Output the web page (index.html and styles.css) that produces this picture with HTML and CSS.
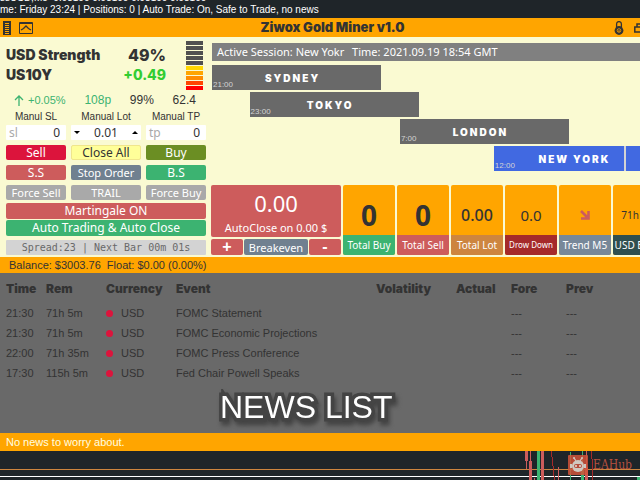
FILE: index.html
```html
<!DOCTYPE html>
<html lang="en">
<head>
    <meta charset="UTF-8">
    <meta name="viewport" content="width=device-width, initial-scale=1.0">
    <title>Ziwox Gold Miner v1.0</title>
    <link rel="stylesheet" href="styles.css">
</head>
<body>

    <!-- Terminal status lines -->
    <div class="status">
        <p>ssUSD,M5&nbsp; 0.98100 0.98100 0.98100 0.98100</p>
        <p>me: Friday 23:24 | Positions: 0 | Auto Trade: On, Safe to Trade, no news</p>
    </div>

    <main class="dashboard">
        <header class="titlebar">
            <div class="tools">
                <button type="button" aria-label="Calculator">
                    <svg width="8" height="14" viewBox="0 0 8 14"><path fill="#333" d="M0 0h8v14H0z"/><path stroke="#ffa500" d="M2 2.5h4M2 4.5h4M2 6.5h4M2 8.5h4M2 10.5h4M2 12.5h4"/></svg>
                </button>
                <button type="button" aria-label="Chart">
                    <svg width="14" height="12" viewBox="0 0 14 12"><path fill="none" stroke="#333" d="M.5.5h13v11H.5zM0 1.5h14"/><path fill="none" stroke="#333" stroke-width="1.3" d="M2 8l2.5-1.5L7 4l2.5 2.5L12 8"/></svg>
                </button>
            </div>
            <h1>Ziwox Gold Miner v1.0</h1>
            <div class="tools tools-right">
                <button type="button" aria-label="Lock">
                    <svg width="10" height="14" viewBox="0 0 10 14"><path fill="none" stroke="#333" stroke-width="1.3" d="M2.6 7V3a2.4 2.4 0 0 1 4.8 0v4"/><circle cx="5" cy="9.5" r="4.4" fill="#333"/><circle cx="5" cy="9.5" r="1.8" fill="none" stroke="#ffa500" stroke-width=".8"/><path stroke="#ffa500" stroke-width=".8" d="M5 9v2"/></svg>
                </button>
                <button type="button" aria-label="Restore">
                    <svg width="14" height="10" viewBox="0 0 14 10"><path fill="none" stroke="#333" stroke-width="1.5" d="M.8 4h9v5h-9zM3 4V1h10v5h-3"/></svg>
                </button>
            </div>
        </header>

        <div class="panels">
            <!-- Trade panel -->
            <section class="trade">
                <div class="strength">
                    <dl>
                        <dt>USD Strength</dt><dd class="percent">49%</dd>
                        <dt>US10Y</dt><dd class="up">+0.49</dd>
                    </dl>
                    <div class="gauge">
                        <i></i><i></i><i></i><i></i><i></i>
                        <i class="gold"></i><i class="orange"></i><i class="dark-orange"></i><i class="orange-red"></i><i class="red"></i>
                    </div>
                </div>
                <div class="readings">
                    <span class="green small"><svg width="10" height="11" viewBox="0 0 10 11"><path fill="none" stroke="currentColor" stroke-width="1.3" d="M5 11V1M1 5l4-4 4 4"/></svg> +0.05%</span>
                    <span class="green">108p</span>
                    <span>99%</span>
                    <span>62.4</span>
                </div>
                <div class="controls">
                    <label for="sl">Manul SL</label>
                    <label for="lot">Manual Lot</label>
                    <label for="tp">Manual TP</label>

                    <div class="field"><span>sl</span><input id="sl" type="text" value="0"></div>
                    <div class="field lot">
                        <button type="button" aria-label="Less"><svg width="6" height="3" viewBox="0 0 6 3"><path d="M0 0h6L3 3z"/></svg></button>
                        <input id="lot" type="text" value="0.01">
                        <button type="button" aria-label="More"><svg width="6" height="3" viewBox="0 0 6 3"><path d="M0 3h6L3 0z"/></svg></button>
                    </div>
                    <div class="field"><span>tp</span><input id="tp" type="text" value="0"></div>

                    <button type="button" class="btn crimson">Sell</button>
                    <button type="button" class="btn yellow">Close All</button>
                    <button type="button" class="btn olive">Buy</button>

                    <button type="button" class="btn rose">S.S</button>
                    <button type="button" class="btn slate small">Stop Order</button>
                    <button type="button" class="btn sea">B.S</button>

                    <button type="button" class="btn gray small">Force Sell</button>
                    <button type="button" class="btn gray small">TRAIL</button>
                    <button type="button" class="btn gray small">Force Buy</button>
                </div>
                <div class="modes">
                    <button type="button" class="btn rose">Martingale ON</button>
                    <button type="button" class="btn sea">Auto Trading &amp; Auto Close</button>
                </div>
                <p class="spread">Spread:23 | Next Bar 00m 01s</p>
            </section>

            <section class="market">
                <p class="session">Active Session: New Yokr <span>Time: 2021.09.19 18:54 GMT</span></p>

                <!-- One column for each hour, starting at 21:00 -->
                <div class="timeline">
                    <div class="bar sydney"><small>21:00</small><b>SYDNEY</b></div>
                    <div class="bar tokyo"><small>23:00</small><b>TOKYO</b></div>
                    <div class="bar london"><small>7:00</small><b>LONDON</b></div>
                    <div class="bar newyork"><small>12:00</small><b>NEW YORK</b><i class="now"></i></div>
                </div>

                <div class="tiles">
                    <div class="autoclose">
                        <div class="profit"><strong>0.00</strong><span>AutoClose on 0.00 $</span></div>
                        <div class="breakeven">
                            <button type="button" class="btn rose big">+</button>
                            <button type="button" class="btn slate small">Breakeven</button>
                            <button type="button" class="btn rose big">-</button>
                        </div>
                    </div>
                    <div class="tile"><strong class="count">0</strong><span class="sea">Total Buy</span></div>
                    <div class="tile"><strong class="count">0</strong><span class="rose">Total Sell</span></div>
                    <div class="tile"><strong class="lots">0.00</strong><span class="peru">Total Lot</span></div>
                    <div class="tile"><strong class="draw">0.0</strong><span class="brown tiny">Drow Down</span></div>
                    <div class="tile"><strong><svg width="10" height="10" viewBox="0 0 10 10"><path fill="none" stroke="#cd5c5c" stroke-width="2.6" d="M1 1l6 6M8.5 1v7.500H1"/></svg></strong><span class="lightslate">Trend M5</span></div>
                    <div class="tile"><strong class="hours">71h 5m</strong><span class="darkslate">USD Event</span></div>
                </div>
            </section>
        </div>

        <p class="balance">Balance: $3003.76&nbsp; Float: $0.00 (0.00%)</p>

        <!-- News calendar -->
        <section class="news">
            <table>
                <thead>
                    <tr><th class="c-time">Time</th><th class="c-rem">Rem</th><th class="c-cur">Currency</th><th class="c-event">Event</th><th class="c-vol">Volatility</th><th class="c-act">Actual</th><th class="c-fore">Fore</th><th>Prev</th></tr>
                </thead>
                <tbody>
                    <tr><td>21:30</td><td>71h 5m</td><td class="cur">USD</td><td>FOMC Statement</td><td></td><td></td><td>---</td><td>---</td></tr>
                    <tr><td>21:30</td><td>71h 5m</td><td class="cur">USD</td><td>FOMC Economic Projections</td><td></td><td></td><td>---</td><td>---</td></tr>
                    <tr><td>22:00</td><td>71h 35m</td><td class="cur">USD</td><td>FOMC Press Conference</td><td></td><td></td><td>---</td><td>---</td></tr>
                    <tr><td>17:30</td><td>115h 5m</td><td class="cur">USD</td><td>Fed Chair Powell Speaks</td><td></td><td></td><td>---</td><td>---</td></tr>
                </tbody>
            </table>
            <h2 class="caption">NEWS LIST</h2>
        </section>

        <p class="alert">No news to worry about.</p>
    </main>

    <!-- Price chart behind the panel -->
    <div class="chart">
        <svg class="candles" width="200" height="29" viewBox="0 0 200 29">
            <path fill="#cd5c5c" d="M85 0h3v10h-3zM86 10h1v8h-1zM90 0h1v10h-1zM89 10h3v19h-3zM94 27h1v2h-1zM101 0h3v29h-3zM118 16h1v13h-1zM146 0h1v16h-1zM145 16h3v13h-3z"/>
            <path fill="#3cb371" d="M97 0h3v29h-3zM130 1h1v28h-1zM142 0h1v15h-1zM141 15h3v14h-3zM197 26h3v3h-3z"/>
            <path fill="#a52a2a" d="M111 0h1v6h-1zM112 6h1v9h-1zM113 15h1v10h-1zM114 25h1v4h-1zM151 0h1v8h-1zM152 8h1v21h-1z"/>
        </svg>
        <a class="brand" href="#">
            <svg width="20" height="20" viewBox="0 0 20 20">
                <rect width="20" height="20" rx="1" fill="#d2533a" opacity=".85"/>
                <path stroke="#cfc4bc" stroke-width="1.3" d="M6 3l2 3M14 3l-2 3"/>
                <circle cx="6" cy="3" r="1" fill="#cfc4bc"/><circle cx="14" cy="3" r="1" fill="#cfc4bc"/>
                <ellipse cx="10" cy="11" rx="6" ry="6" fill="#cfc9c0"/>
                <path fill="#cfc9c0" d="M2 9h2v4H2zM16 9h2v4h-2z"/>
                <rect x="6" y="9" width="8" height="4" rx="2" fill="#b5503f"/>
                <circle cx="8" cy="11" r="1" fill="#e8e0d8"/><circle cx="12" cy="11" r="1" fill="#e8e0d8"/>
            </svg>
            <span>EAHub</span>
        </a>
    </div>

</body>
</html>
```
FILE: styles.css
```css
* {
    box-sizing: border-box;
}

body {
    margin: 0;
    min-height: 100vh;
    display: flex;
    flex-direction: column;
    overflow: hidden;
    color: #333333;
    background-color: #1f2529;
    font-family: "Liberation Sans", Arial, sans-serif;
    font-size: 12px;
}

p, h1, h2, dl, dd {
    margin: 0;
}

button, input {
    padding: 0;
    border: 0;
    background: none;
    color: inherit;
    font: inherit;
}

svg {
    display: block;
}

/* Status lines */
.status {
    height: 18px;
    display: flex;
    flex-direction: column;
    justify-content: flex-end;
    padding-bottom: 2px;
    overflow: hidden;
    color: #ffffff;
    font-size: 10px;
    line-height: 12px;
    white-space: nowrap;
}

/* The panel runs past the right edge of the window */
.dashboard {
    width: calc(100% + 25px);
}

.titlebar {
    height: 19px;
    padding: 0 3px;
    display: grid;
    grid-template-columns: 1fr auto 1fr;
    align-items: center;
    background-color: #ffa500;
}

.titlebar h1 {
    font-family: Inter, sans-serif;
    font-size: 13px;
    font-weight: 900;
    line-height: 19px;
}

.tools {
    display: flex;
    align-items: center;
    gap: 8px;
}

.tools-right {
    justify-content: flex-end;
    padding-right: 14px;
    gap: 10px;
}

.panels {
    display: flex;
    gap: 5px;
    padding-left: 6px;
    background-color: #fafad2;
}

/* Trade panel */
.trade {
    width: 200px;
    flex: none;
    padding: 4px 0 2px;
}

.strength {
    display: flex;
    justify-content: space-between;
    padding-right: 3px;
}

.strength dl {
    flex: 1;
    display: grid;
    grid-template-columns: 1fr auto;
    align-content: start;
    padding: 4px 20px 0 0;
    font-family: Inter, sans-serif;
    font-size: 14px;
    font-weight: 900;
    line-height: 20px;
}

.strength dd {
    text-align: right;
}

.strength .percent {
    font-size: 16px;
    font-weight: 800;
}

.up {
    color: #32cd32;
    font-weight: 800;
}

.gauge {
    width: 17px;
    display: flex;
    flex-direction: column;
    gap: 1px;
}

.gauge i {
    height: 4px;
    background-color: #505050;
}

.gauge .gold { background-color: #ffd700; }
.gauge .orange { background-color: #ffa500; }
.gauge .dark-orange { background-color: #ff8c00; }
.gauge .orange-red { background-color: #ff4500; }
.gauge .red { background-color: #ff0000; }

.readings {
    display: flex;
    align-items: center;
    justify-content: space-between;
    padding: 0 10px 0 8px;
    margin-top: 2px;
    line-height: 16px;
}

.readings span {
    display: flex;
    align-items: center;
    gap: 4px;
}

.readings .small {
    font-size: 11px;
}

.green {
    color: #3cb371;
}

.controls {
    display: grid;
    grid-template-columns: 60px 70px 60px;
    grid-template-rows: 12px repeat(4, 15px);
    gap: 5px;
}

.controls label {
    padding-top: 3px;
    font-size: 10px;
    line-height: 12px;
    text-align: center;
    white-space: nowrap;
}

.field {
    height: 15px;
    display: flex;
    align-items: center;
    justify-content: space-between;
    padding: 0 6px 0 3px;
    background-color: #ffffff;
    border-radius: 1px;
    font-family: "Noto Sans", sans-serif;
    line-height: 15px;
}

.field span {
    color: #a9a9a9;
}

.field input {
    width: 30px;
    height: 15px;
    text-align: right;
}

.field.lot {
    padding: 0 3px;
}

.field.lot input {
    text-align: center;
}

.btn {
    height: 15px;
    overflow: hidden;
    border-radius: 2px;
    color: #ffffff;
    font-family: "Noto Sans", sans-serif;
    font-size: 12px;
    line-height: 15px;
    white-space: nowrap;
}

.btn.small {
    font-size: 11px;
}

.btn.big {
    font-family: "Liberation Sans", Arial, sans-serif;
    font-size: 16px;
    font-weight: 700;
    line-height: 16px;
}

.crimson { background-color: #dc143c; }
.btn.yellow {
    background-color: #ffff99;
    border: 1px solid #f0e68c;
    color: #333333;
    line-height: 13px;
}
.olive { background-color: #6b8e23; }
.rose { background-color: #cd5c5c; }
.slate { background-color: #708090; }
.sea { background-color: #3cb371; }
.gray { background-color: #a9a9a9; }
.peru { background-color: #cd853f; }
.brown { background-color: #a52a2a; }
.lightslate { background-color: #778899; }
.darkslate { background-color: #2f4f4f; }

.modes {
    display: grid;
    gap: 1px;
    margin: 3px 0 4px;
}

.modes .btn {
    height: 16px;
    line-height: 16px;
}

.spread {
    border-radius: 1px;
    background-color: #d3d3d3;
    color: #696969;
    font-family: "DejaVu Sans Mono", monospace;
    font-size: 10px;
    line-height: 15px;
    text-align: center;
}

/* Market sessions */
.market {
    flex: 1;
    min-width: 0;
    display: flex;
    flex-direction: column;
    padding-top: 6px;
}

.session {
    margin-left: 1px;
    padding-left: 5px;
    background-color: #808080;
    color: #ffffff;
    font-family: "Noto Sans", sans-serif;
    font-size: 11px;
    line-height: 18px;
    white-space: nowrap;
}

.session span {
    margin-left: 5px;
}

.timeline {
    display: grid;
    grid-template-columns: repeat(24, 1fr);
    grid-auto-rows: 25px;
    gap: 2px 0;
    margin: 4px 2px 14px 1px;
}

.bar {
    position: relative;
    display: flex;
    align-items: center;
    justify-content: center;
    padding-right: 8px;
    background-color: #696969;
    color: #ffffff;
}

.sydney { grid-area: 1 / 1 / auto / span 9; }
.tokyo { grid-area: 2 / 3 / auto / span 9; }
.london { grid-area: 3 / 11 / auto / span 9; }
.newyork {
    grid-area: 4 / 16 / auto / span 9;
    background-color: #4169e1;
}

.bar b {
    font-family: Inter, sans-serif;
    font-size: 10px;
    font-weight: 900;
    letter-spacing: 2px;
}

.bar small {
    position: absolute;
    left: 1px;
    bottom: 0;
    color: #d3d3d3;
    font-size: 8px;
    line-height: 10px;
}

.now {
    position: absolute;
    top: 0;
    bottom: 0;
    right: 22%;
    width: 2px;
    background-color: #d3d3d3;
}

/* Tiles */
.tiles {
    display: grid;
    grid-template-columns: 130fr repeat(6, 52fr);
    gap: 2px;
    height: 70px;
}

.autoclose {
    display: grid;
    grid-template-rows: 1fr 16px;
    gap: 2px;
}

.profit {
    display: flex;
    flex-direction: column;
    align-items: center;
    border-radius: 2px;
    background-color: #cd5c5c;
    color: #ffffff;
    font-family: "Noto Sans", sans-serif;
    font-size: 11px;
    line-height: 14px;
}

.profit strong {
    font-size: 22px;
    font-weight: 400;
    line-height: 36px;
}

.breakeven {
    display: grid;
    grid-template-columns: 1fr 2fr 1fr;
    gap: 1px;
}

.breakeven .btn {
    height: 16px;
}

.tile {
    display: grid;
    grid-template-rows: 1fr 20px;
    overflow: hidden;
    border-radius: 2px;
    background-color: #ffa500;
    font-family: "Noto Sans", sans-serif;
}

.tile strong {
    display: flex;
    align-items: center;
    justify-content: center;
    padding-top: 9px;
    font-weight: 400;
    line-height: 28px;
}

.tile span {
    color: #ffffff;
    font-size: 10px;
    line-height: 20px;
    text-align: center;
    white-space: nowrap;
}

.tile .tiny {
    font-size: 8px;
}

.tile .count {
    font-size: 28px;
    font-weight: 700;
}

.tile .lots {
    font-size: 16px;
    font-weight: 500;
}

.tile .draw {
    font-size: 15px;
}

.tile .hours {
    font-size: 10px;
}

/* Balance and news */
.balance {
    padding-left: 9px;
    background-color: #ffa500;
    font-size: 11px;
    line-height: 16px;
}

.news {
    position: relative;
    height: 160px;
    padding: 5px 6px 0;
    background-color: #696969;
}

.news table {
    width: 100%;
    table-layout: fixed;
    border-collapse: collapse;
}

.news th, .news td {
    height: 20px;
    padding: 0;
    font-size: 11px;
    text-align: left;
    white-space: nowrap;
}

.news th {
    height: 25px;
    padding-bottom: 5px;
    font-family: Inter, sans-serif;
    font-size: 12px;
    font-weight: 900;
}

.c-time { width: 40px; }
.c-rem { width: 60px; }
.c-cur { width: 70px; }
.c-event { width: 200px; }
.c-vol { width: 80px; }
.c-act { width: 55px; }
.c-fore { width: 55px; }

.cur::before {
    content: "";
    display: inline-block;
    width: 7px;
    height: 7px;
    margin-right: 8px;
    border-radius: 50%;
    background-color: #dc143c;
}

.caption {
    position: absolute;
    top: 116px;
    left: 220px;
    color: #ffffff;
    font-size: 32px;
    font-weight: 400;
    line-height: 36px;
    -webkit-text-stroke: 7px #444444;
    paint-order: stroke fill;
    stroke-linejoin: round;
    filter: drop-shadow(2px 4px 2px #444444);
}

.alert {
    padding-left: 6px;
    background-color: #ffa500;
    color: #ffffe0;
    font-size: 11px;
    line-height: 18px;
}

/* Chart */
.chart {
    position: relative;
    flex: 1;
    min-height: 29px;
    overflow: hidden;
    background: linear-gradient(#cd853f, #cd853f) 0 18px / 100% 1px no-repeat,
        linear-gradient(#ffffff, #ffffff) 0 25px / 100% 1px no-repeat;
}

.candles {
    margin-left: auto;
}

.brand {
    position: absolute;
    top: 4px;
    right: 8px;
    display: flex;
    align-items: center;
    gap: 5px;
    color: #b5503f;
    font-family: "DejaVu Serif Condensed", "DejaVu Serif", serif;
    font-size: 12px;
    text-decoration: none;
}
```
